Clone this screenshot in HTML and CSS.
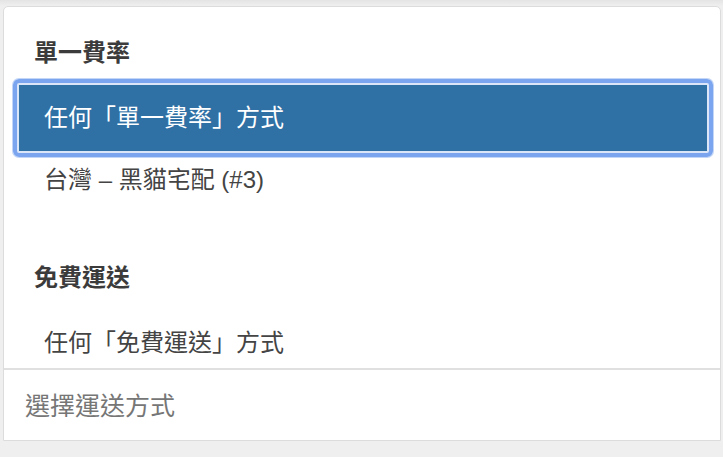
FILE: index.html
```html
<!DOCTYPE html>
<html lang="zh-Hant">
<head>
    <meta charset="UTF-8">
    <meta name="viewport" content="width=device-width, initial-scale=1.0">
    <title>選擇運送方式</title>
    <link rel="stylesheet" href="styles.css">
</head>
<body>
  <div class="dropdown">
    <!-- Список вариантов -->
    <div class="options">
      <div class="group">
        <div class="group-label">單一費率</div>
        <div class="option highlighted">任何「單一費率」方式</div>
        <div class="option">台灣 – 黑貓宅配 (#3)</div>
      </div>
      <div class="group">
        <div class="group-label">免費運送</div>
        <div class="option">任何「免費運送」方式</div>
      </div>
    </div>
    <div class="search">選擇運送方式</div>
  </div>
</body>
</html>
```

FILE: styles.css
```css
* { margin: 0; padding: 0; box-sizing: border-box; }

body {
    font-family: "Liberation Sans", "Noto Sans CJK TC", sans-serif;
    background: linear-gradient(#e4e4e4, #efefef 6px);
    background-color: #efefef;
    color: #444;
    height: 457px;
    overflow: hidden;
}

/* Выпадающий список */
.dropdown {
    margin: 6px 2px 0 3px;
    height: 435px;
    background-color: #fff;
    border: 1px solid #dcdcdc;
    border-radius: 5px 5px 0 0;
}

.options {
    height: 361px;
    overflow: hidden;
}

.group {
    padding: 27px 0 22px;
}

.group:first-child {
    padding-top: 28px;
}

.group-label {
    font-size: 24px;
    line-height: 36px;
    font-weight: bold;
    color: #3b3b3b;
    padding: 0 0 16px 30px;
}

.option {
    position: relative;
    font-size: 24px;
    line-height: 36px;
    padding: 13px 23px;
    margin: 0 15px 0 17px;
    color: #444;
}

.option.highlighted {
    background-color: #2f70a5;
    color: #fff;
    box-shadow: 0 0 0 2px #2f70a5, 0 0 0 4px #dbe7f9;
}

.option.highlighted::after {
    content: "";
    position: absolute;
    top: -8px;
    left: -8px;
    right: -8px;
    bottom: -8px;
    border: 4px solid #7ba5ee;
    border-radius: 6px;
    box-shadow: 0 0 0 1px rgba(123, 165, 238, 0.45);
}

/* Поле поиска */
.search {
    border-top: 2px solid #e0e0e0;
    font-size: 25px;
    line-height: 36px;
    padding: 18px 21px 15px;
    color: #767676;
}
```
